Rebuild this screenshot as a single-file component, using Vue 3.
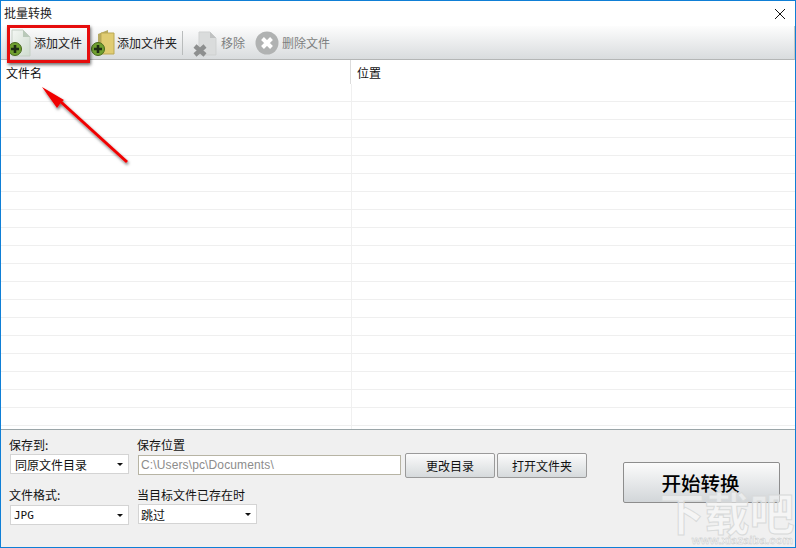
<script setup>
const rows = Array.from({ length: 19 }, (_, i) => i)
</script>

<template>
  <div class="win">
    <header class="title">
      <span>批量转换</span>
      <svg class="close" width="12" height="12" viewBox="0 0 12 12"><path d="M1 1L11 11M11 1L1 11" stroke="#111" stroke-width="1" fill="none" /></svg>
    </header>
    <div class="toolbar">
      <div class="tool first">
        <svg class="ico" width="28" height="30" viewBox="0 0 28 30">
          <defs>
            <linearGradient id="doc" x1="0" y1="0" x2="1" y2="1"><stop offset="0" stop-color="#f4f7f4" /><stop offset="1" stop-color="#cfdccf" /></linearGradient>
          </defs>
          <path d="M5 2H16L23 9V28H5Z" fill="url(#doc)" stroke="#c5cfc5" />
          <path d="M16 2V9H23Z" fill="#b9c9b9" />
          <circle cx="8" cy="21" r="6.500" fill="#6fa030" stroke="#47691c" />
          <path d="M8 17V25M4 21H12" stroke="#1e2b14" stroke-width="2.600" />
        </svg>
        <span>添加文件</span>
      </div>
      <div class="tool second">
        <svg class="ico" width="27" height="28" viewBox="0 0 27 28">
          <path d="M8 5L18 1V22L8 26Z" fill="#b7aa62" />
          <path d="M11 4H24V25H11Z" fill="#e0cc72" stroke="#bba954" />
          <circle cx="8" cy="20" r="6.500" fill="#6fa030" stroke="#47691c" />
          <path d="M8 16V24M4 20H12" stroke="#1e2b14" stroke-width="2.600" />
        </svg>
        <span>添加文件夹</span>
      </div>
      <i class="sep"></i>
      <div class="tool third off">
        <svg class="ico" width="26" height="28" viewBox="0 0 26 28">
          <path d="M7 3H18L24 9V26H7Z" fill="#dadcdc" stroke="#cfd1d1" />
          <path d="M18 3V9H24Z" fill="#bfc1c1" />
          <path d="M3 17L13 26M13 17L3 26" stroke="#8d8f8f" stroke-width="4.500" />
        </svg>
        <span>移除</span>
      </div>
      <div class="tool fourth off">
        <svg class="ico" width="24" height="24" viewBox="0 0 24 24">
          <circle cx="12" cy="12" r="11.500" fill="#b0b2b2" />
          <path d="M7.500 7.500L16.500 16.500M16.500 7.500L7.500 16.500" stroke="#fff" stroke-width="4" />
        </svg>
        <span>删除文件</span>
      </div>
    </div>
    <div class="table">
      <div class="thead">
        <div class="c1">文件名</div>
        <div class="c2">位置</div>
      </div>
      <div class="tbody">
        <div v-for="r in rows" :key="r" class="row"></div>
      </div>
    </div>
    <div class="panel">
      <div class="col-a">
        <label>保存到:</label>
        <div class="select w119"><span>同原文件目录</span><i></i></div>
        <label class="lower">文件格式:</label>
        <div class="select w119 jpg"><span class="mono">JPG</span><i></i></div>
      </div>
      <div class="col-b">
        <label>保存位置</label>
        <div class="path-row">
          <div class="input">C:\Users\pc\Documents\</div>
          <button class="btn">更改目录</button>
          <button class="btn">打开文件夹</button>
        </div>
        <label class="lower2">当目标文件已存在时</label>
        <div class="select w119 s3"><span>跳过</span><i></i></div>
      </div>
      <button class="start">开始转换</button>
    </div>

    <div class="redbox"></div>
    <svg class="arrow" width="100" height="90" viewBox="0 0 100 90">
      <defs>
        <filter id="sh" x="-20%" y="-20%" width="150%" height="150%"><feDropShadow dx="1" dy="2" stdDeviation="1.500" flood-color="#000" flood-opacity=".55" /></filter>
      </defs>
      <g filter="url(#sh)">
        <path d="M93 82L27 22" stroke="#f00000" stroke-width="3" fill="none" />
        <path d="M8 7L30 20L27 22.500L23 28Z" fill="#f00000" />
      </g>
    </svg>
    <div class="mark" aria-hidden="true">
      <div class="mark-big">下载吧</div>
      <div class="mark-small">www.xiazaiba.com</div>
    </div>
  </div>
</template>

<style scoped>
.win {
  position: relative;
  box-sizing: border-box;
  width: 796px;
  height: 548px;
  border: 1px solid #0f7fd6;
  background: #fff;
  display: flex;
  flex-direction: column;
  overflow: hidden;
  font: 12px/16px "Noto Sans CJK SC", "Liberation Sans", sans-serif;
  color: #111;
}
.title {
  height: 25px;
  flex: none;
  display: flex;
  align-items: center;
  justify-content: space-between;
  padding: 0 9px 0 3px;
  color: #222;
}
.title span { margin-top: -1px; }
.toolbar {
  height: 34px;
  flex: none;
  display: flex;
  align-items: center;
  background: linear-gradient(#fdfdfd, #d9dcde);
  border-bottom: 1px solid #b4b6b6;
  box-sizing: border-box;
  border-right: 1px solid #c4c6c6;
}
.tool { display: flex; align-items: center; color: #222; }
.tool span { white-space: nowrap; }
.first { margin-left: 6px; width: 76px; }
.first .ico { margin-right: -1px; }
.second { margin-left: 7px; }
.second .ico { margin-right: 0; }
.sep { width: 1px; height: 24px; background: #b9bcbc; margin: 0 9px 0 5px; }
.third span { margin-left: 3px; }
.fourth { margin-left: 10px; }
.fourth span { margin-left: 3px; }
.off { color: #7d7f80; }
.table { flex: 1; min-height: 0; display: flex; flex-direction: column; }
.thead { height: 24px; flex: none; display: flex; }
.c1 { width: 350px; padding: 5px 0 0 5px; box-sizing: border-box; border-right: 1px solid #dcdcdc; }
.c2 { flex: 1; padding: 5px 0 0 6px; }
.tbody {
  flex: 1;
  overflow: hidden;
  position: relative;
  background: linear-gradient(#f0f0f0, #f0f0f0) 350px 0 / 1px 100% no-repeat;
}
.row { height: 18px; box-sizing: border-box; border-bottom: 1px solid #efefef; }
.panel {
  height: 118px;
  flex: none;
  box-sizing: border-box;
  background: #f0f0f0;
  border-top: 1px solid #9aa5a8;
  display: flex;
  padding: 7px 15px 0 9px;
  position: relative;
}
.col-a { width: 119px; margin-right: 9px; flex: none; }
.col-b { flex: 1; }
label { display: block; height: 17px; line-height: 16px; white-space: nowrap; margin-left: -1px; }
.lower { margin-top: 13px; }
.lower2 { margin-top: 8px; }
.select {
  box-sizing: border-box;
  height: 20px;
  background: #fff;
  border: 1px solid #d4d4d4;
  display: flex;
  align-items: center;
  justify-content: space-between;
  padding: 0 5px 0 4px;
}
.select span { margin-top: 1px; }
.jpg { padding-left: 3px; margin-top: 1px; }
.select i {
  width: 0;
  height: 0;
  border: 3px solid transparent;
  border-top: 3px solid #111;
  border-bottom: 0;
}
.w119 { width: 119px; }
.mono { font-family: "DejaVu Sans Mono", monospace; font-size: 11px; }
.s3 { margin-top: 0; padding-left: 2px; }
.path-row { display: flex; align-items: flex-start; gap: 2px; height: 26px; margin-top: -1px; }
.input {
  box-sizing: border-box;
  width: 263px;
  height: 20px;
  margin-top: 2px;
  margin-right: 2px;
  background: #fff;
  border: 1px solid #b7b4a4;
  color: #8c8c8c;
  font-family: "Liberation Sans", sans-serif;
  letter-spacing: .13px;
  line-height: 18px;
  padding-left: 2px;
}
.btn {
  width: 90px;
  height: 25px;
  padding: 0;
  box-sizing: border-box;
  border: 1px solid #9a9a9a;
  border-radius: 2px;
  background: linear-gradient(#fbfbfb, #d6dadc);
  font: inherit;
  color: #111;
}
.start {
  align-self: flex-start;
  flex: none;
  width: 157px;
  height: 41px;
  margin-top: 25px;
  padding: 0 2px 0 0;
  box-sizing: border-box;
  border: 1px solid #8d8d8d;
  border-radius: 2px;
  background: linear-gradient(#fbfbfb, #d2d6d9);
  font: 500 19.500px/1 "Noto Sans CJK SC", sans-serif;
  color: #000;
}
.redbox {
  position: absolute;
  left: 6px;
  top: 24px;
  width: 83px;
  height: 38px;
  box-sizing: border-box;
  border: 3px solid #e60d0d;
  box-shadow: 1px 2px 3px rgba(0, 0, 0, .55);
}
.arrow { position: absolute; left: 33px; top: 79px; }
.mark {
  position: absolute;
  right: -1px;
  bottom: 1px;
  width: 138px;
  text-align: center;
  pointer-events: none;
}
.mark-big {
  font: 700 45px/46px "Noto Sans CJK SC", sans-serif;
  color: rgba(250, 250, 250, .55);
  -webkit-text-stroke: 1px #d8dada;
  white-space: nowrap;
}
.mark-small {
  font: 700 11.500px/11px "Liberation Sans", sans-serif;
  color: #f6f6f6;
  -webkit-text-stroke: .4px #c4c6c6;
  white-space: nowrap;
  text-align: right;
  padding-right: 3px;
}
</style>

<style>
html, body { margin: 0; background: #fff; }
</style>
